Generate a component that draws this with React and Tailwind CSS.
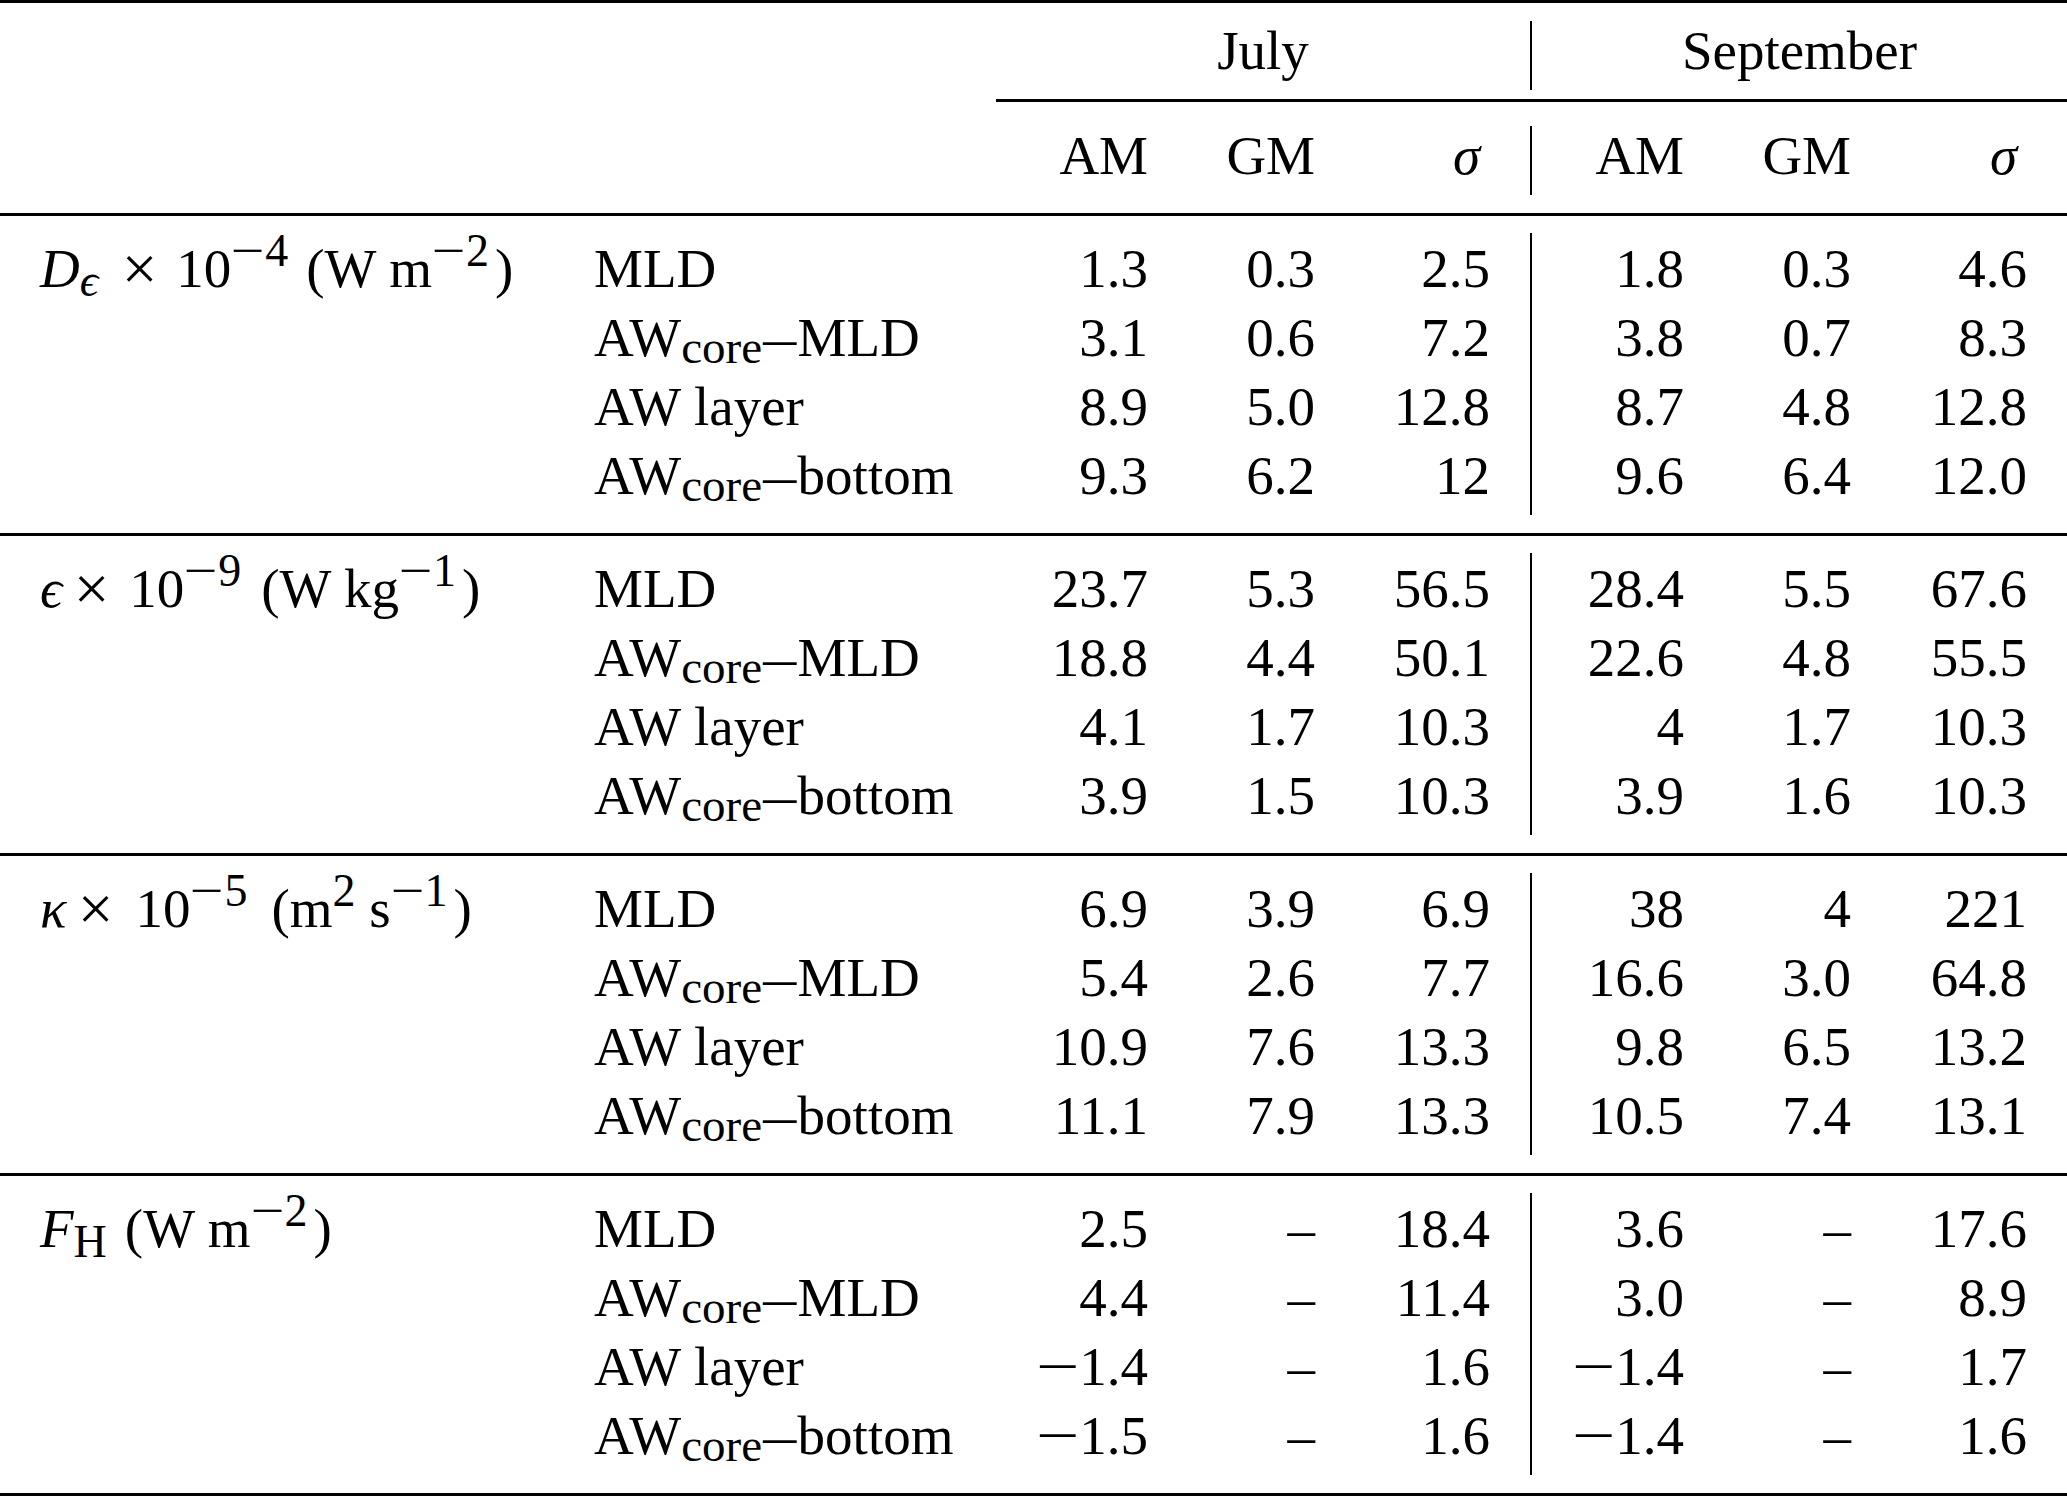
import React from "react";

const COLS =
  "grid grid-cols-[553px_443px_192px_167px_175px_194px_167px_176px]";

const Minus = () => (
  <span className="inline-block scale-x-[1.4] mx-[6px]">−</span>
);

const SupMinus = () => (
  <span className="inline-block scale-x-[1.3] mx-[4px]">−</span>
);

const Sup = ({ children }) => (
  <sup className="text-[46px] -top-[21px]">{children}</sup>
);

const Core = () => <sub className="text-[47px] -bottom-[7px]">core</sub>;

const Dash = () => (
  <span className="inline-block scale-x-[1.2] mx-[4px]">–</span>
);

const Times = ({ className = "" }) => (
  <span className={`inline-block scale-[1.15] ${className}`}>×</span>
);

const rowNames = [
  <>MLD</>,
  <>
    AW
    <Core />
    <Dash />
    MLD
  </>,
  <>AW layer</>,
  <>
    AW
    <Core />
    <Dash />
    bottom
  </>,
];

const sections = [
  {
    label: (
      <>
        <span className="italic">D</span>
        <sub className="text-[46px] -bottom-[9px] italic">ϵ</sub>
        <Times className="ml-[26px] mr-[21px]" />
        10
        <Sup>
          <SupMinus />4
        </Sup>
        <span className="ml-[18px]">(W m</span>
        <Sup>
          <SupMinus />2
        </Sup>
        <span className="ml-[6px]">)</span>
      </>
    ),
    rows: [
      ["1.3", "0.3", "2.5", "1.8", "0.3", "4.6"],
      ["3.1", "0.6", "7.2", "3.8", "0.7", "8.3"],
      ["8.9", "5.0", "12.8", "8.7", "4.8", "12.8"],
      ["9.3", "6.2", "12", "9.6", "6.4", "12.0"],
    ],
  },
  {
    label: (
      <>
        <span className="italic">ϵ</span>
        <Times className="ml-[14px] mr-[22px]" />
        10
        <Sup>
          <SupMinus />9
        </Sup>
        <span className="ml-[20px]">(W kg</span>
        <Sup>
          <SupMinus />1
        </Sup>
        <span className="ml-[6px]">)</span>
      </>
    ),
    rows: [
      ["23.7", "5.3", "56.5", "28.4", "5.5", "67.6"],
      ["18.8", "4.4", "50.1", "22.6", "4.8", "55.5"],
      ["4.1", "1.7", "10.3", "4", "1.7", "10.3"],
      ["3.9", "1.5", "10.3", "3.9", "1.6", "10.3"],
    ],
  },
  {
    label: (
      <>
        <span className="italic">κ</span>
        <Times className="ml-[14px] mr-[24px]" />
        10
        <Sup>
          <SupMinus />5
        </Sup>
        <span className="ml-[24px]">(m</span>
        <Sup>2</Sup>
        <span> s</span>
        <Sup>
          <SupMinus />1
        </Sup>
        <span className="ml-[6px]">)</span>
      </>
    ),
    rows: [
      ["6.9", "3.9", "6.9", "38", "4", "221"],
      ["5.4", "2.6", "7.7", "16.6", "3.0", "64.8"],
      ["10.9", "7.6", "13.3", "9.8", "6.5", "13.2"],
      ["11.1", "7.9", "13.3", "10.5", "7.4", "13.1"],
    ],
  },
  {
    label: (
      <>
        <span className="italic">F</span>
        <sub className="text-[46px] -bottom-[10px]">H</sub>
        <span className="ml-[18px]">(W m</span>
        <Sup>
          <SupMinus />2
        </Sup>
        <span className="ml-[6px]">)</span>
      </>
    ),
    rows: [
      ["2.5", "–", "18.4", "3.6", "–", "17.6"],
      ["4.4", "–", "11.4", "3.0", "–", "8.9"],
      ["-1.4", "–", "1.6", "-1.4", "–", "1.7"],
      ["-1.5", "–", "1.6", "-1.4", "–", "1.6"],
    ],
  },
];

const Num = ({ v }) =>
  v.startsWith("-") ? (
    <>
      <Minus />
      {v.slice(1)}
    </>
  ) : (
    <>{v}</>
  );

const Cell = ({ children, className = "" }) => (
  <div className={`h-[69px] leading-[63px] whitespace-nowrap ${className}`}>
    {children}
  </div>
);

function Section({ section }) {
  return (
    <div className={`${COLS} border-b-[3px] border-black pt-[17px] pb-[18px]`}>
      <div className="pt-[4px] pb-[2px] pl-[40px]">
        <Cell>{section.label}</Cell>
      </div>
      <div className="pt-[4px] pb-[2px] pl-[41px]">
        {rowNames.map((n, i) => (
          <Cell key={i}>{n}</Cell>
        ))}
      </div>
      {[0, 1, 2, 3, 4, 5].map((c) => (
        <div
          key={c}
          className={`pt-[4px] pb-[2px] pr-[40px] text-right ${
            c === 3 ? "border-l-2 border-black" : ""
          }`}
        >
          {section.rows.map((r, i) => (
            <Cell key={i}>
              <Num v={r[c]} />
            </Cell>
          ))}
        </div>
      ))}
    </div>
  );
}

const Head = ({ children, className = "" }) => (
  <div className={`h-[69px] leading-[59px] ${className}`}>{children}</div>
);

export default function App() {
  return (
    <div className="w-[2067px] h-[1497px] bg-white text-black text-[55px] font-['Liberation_Serif','DejaVu_Serif',serif]">
      <div className="border-t-[3px] border-b-[3px] border-black pt-[18px] pb-[18px]">
        <div className={COLS}>
          <Head className="col-start-3 col-span-3 text-center">July</Head>
          <Head className="col-span-3 text-center border-l-2 border-black">
            September
          </Head>
          <div className="col-start-3 col-span-6 mt-[9px] mb-[24px] h-[3px] bg-black" />
          <Head className="col-start-3 text-right pr-[40px]">AM</Head>
          <Head className="text-right pr-[40px]">GM</Head>
          <Head className="text-right pr-[50px] italic">σ</Head>
          <Head className="text-right pr-[40px] border-l-2 border-black">AM</Head>
          <Head className="text-right pr-[40px]">GM</Head>
          <Head className="text-right pr-[50px] italic">σ</Head>
        </div>
      </div>
      {sections.map((s, i) => (
        <Section key={i} section={s} />
      ))}
    </div>
  );
}
